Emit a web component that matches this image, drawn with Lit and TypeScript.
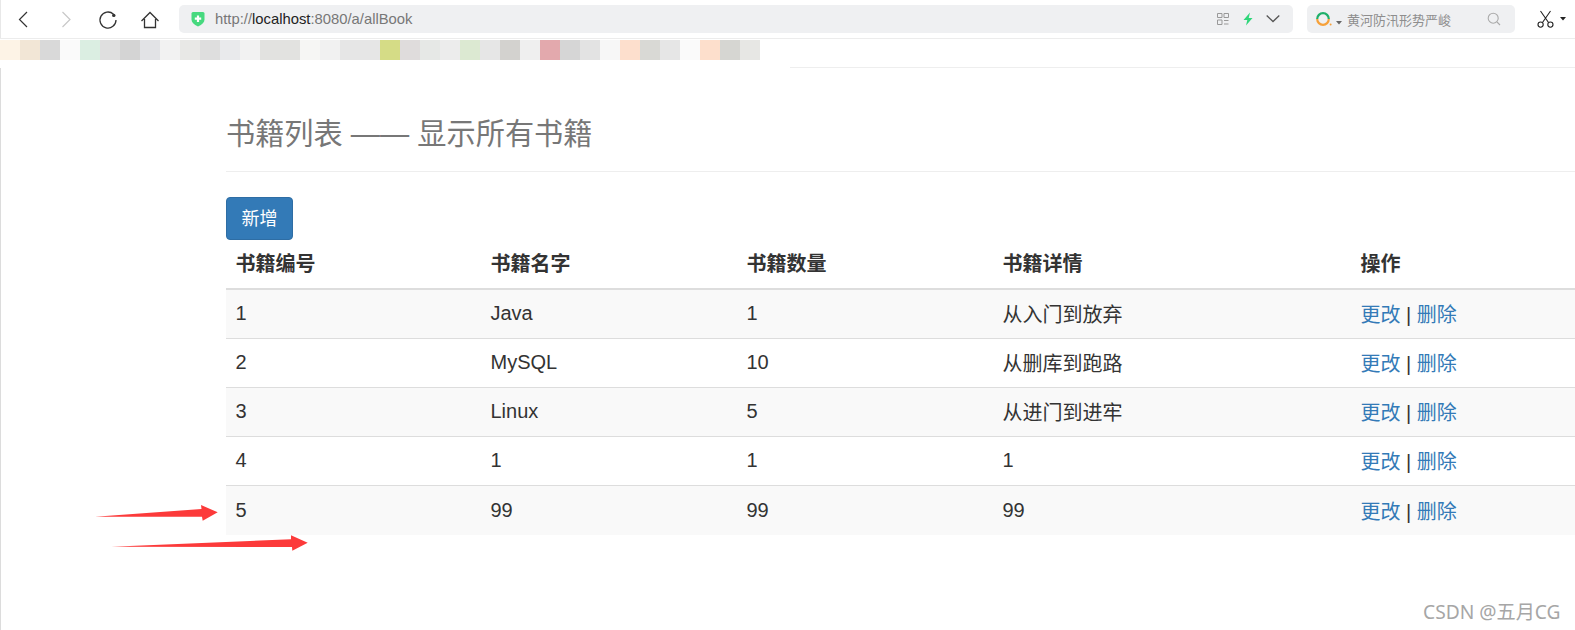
import { LitElement, html, css, svg } from "lit";
import { customElement } from "lit/decorators.js";

const SW = ["#fdf3e6","#f2e6d6","#d9d9d9","#fafafa","#dbeee2","#dfdfdf","#d4d4d4","#e2e3e6","#f2f2f2","#e8e8e6","#dedede","#e9eaec","#f2f2f2","#e2e2e0","#e2e2e0","#f6f6f4","#f1f1f1","#e6e6e6","#e6e6e6","#d5dc86","#dfdcdc","#e6e8e6","#ececec","#dce9d2","#e6e6e6","#d3d2cf","#efefef","#e3a9ad","#d6d6d6","#e3e3e3","#f7f7f7","#fddfcd","#d9d9d5","#e6e6e6","#fafafa","#fddfcc","#d6d6d2","#e7e7e4"];
const ROWS = [
  ["1","Java","1","从入门到放弃"],
  ["2","MySQL","10","从删库到跑路"],
  ["3","Linux","5","从进门到进牢"],
  ["4","1","1","1"],
  ["5","99","99","99"],
];

@customElement("app-root")
export class AppRoot extends LitElement {
  static styles = css`
    :host { display: block; position: relative; width: 1575px; height: 630px; overflow: hidden; background: #fff;
      font-family: "Liberation Sans", "Noto Sans CJK SC", sans-serif; color: #333; }
    .toolbar { height: 39px; box-sizing: border-box; border-bottom: 1px solid #ececec; box-shadow: inset 1px 0 0 #e8e8e8; display: flex; align-items: center; }
    .nav { display: block; flex: none; width: 179px; height: 38px; }
    .url { width: 1114px; height: 28px; box-sizing: border-box; background: #eff0f2; border-radius: 5px; display: flex; align-items: center; padding: 0 13px 0 12px; font-size: 14.8px; color: #777; flex: none; }
    .url b { font-weight: 400; color: #222; }
    .url .addr { margin-left: 10px; flex: 1; }
    .search { margin-left: 14px; width: 208px; height: 28px; box-sizing: border-box; background: #eff0f2; border-radius: 5px; display: flex; align-items: center; padding: 0 14px 0 8px; font-size: 13px; color: #8e8e8e; flex: none; }
    .search span { margin-left: 5px; flex: 1; white-space: nowrap; }
    .cut { margin-left: 22px; display: flex; align-items: center; gap: 6px; }
    .strip { display: flex; height: 20px; margin-top: 1px; }
    .strip i { width: 20px; height: 20px; display: block; flex: none; }
    .rule { margin: 7px 0 0 790px; height: 1px; background: #eee; }
    .body { border-left: 1px solid #dcdcdc; height: 562px; box-sizing: border-box; padding-left: 225px; }
    h1 { margin: 0; font-size: 29.2px; font-weight: 400; color: #777; line-height: 40px; padding-top: 46px; height: 104px; box-sizing: border-box; border-bottom: 1px solid #eee; white-space: nowrap; }
    .btn { display: block; margin-top: 25px; width: 67px; height: 43px; box-sizing: border-box; background: #337ab7; border: 1px solid #2e6da4; border-radius: 4px; color: #fff; font-size: 18px; line-height: 42px; text-align: center; }
    table { border-collapse: separate; border-spacing: 0; table-layout: fixed; width: 1349px; font-size: 20px; }
    col.c1 { width: 255px; } col.c2 { width: 256px; } col.c3 { width: 256px; } col.c4 { width: 358px; } col.c5 { width: 224px; }
    th { text-align: left; font-weight: 700; padding: 0 10px 4px 9.5px; height: 50px; border-bottom: 2px solid #ddd; box-sizing: border-box; }
    td { padding: 0 10px 1px 9.5px; height: 49px; box-sizing: border-box; border-bottom: 1px solid #ddd; }
    tbody tr:nth-child(odd) td { background: #f9f9f9; }
    tbody tr:last-child td { border-bottom: 0; }
    a { color: #337ab7; text-decoration: none; }
    .arrows { position: absolute; left: 0; top: 0; pointer-events: none; }
    .mark { position: absolute; left: 1423px; top: 597px; font-family: "Noto Sans", "Noto Sans CJK SC", sans-serif; font-size: 19.2px; color: #a6a6a6; white-space: nowrap; }
  `;

  render() {
    return html`
      <div class="toolbar">
        <svg class="nav" viewBox="0 0 179 38">
          <path d="M27 12 L19.5 19.5 L27 27" fill="none" stroke="#333" stroke-width="1.2"/>
          <path d="M62.5 12 L70 19.5 L62.5 27" fill="none" stroke="#c8c8c8" stroke-width="1.2"/>
          <path d="M113.5 14.2 A8 8 0 1 0 116 20" fill="none" stroke="#333" stroke-width="1.3"/>
          <circle cx="113.8" cy="15.4" r="1.7" fill="#333"/>
          <path d="M141.5 21 L150 12.5 L158.5 21 M144.5 19 V27.5 H155.5 V19" fill="none" stroke="#333" stroke-width="1.3"/>
        </svg>
        <div class="url">
          <svg width="14" height="16" viewBox="0 0 14 16"><path d="M0.5 2.5 Q0.5 1 2 1 H12 Q13.5 1 13.5 2.5 V8.5 Q13.5 12.5 7 15.5 Q0.5 12.5 0.5 8.5 Z" fill="#47d97f"/><path d="M7 4.5 V11 M3.8 7.7 H10.2" stroke="#fff" stroke-width="2.2"/></svg>
          <span class="addr">http://<b>localhost</b>:8080/a/allBook</span>
          <svg width="12" height="12" viewBox="0 0 12 12"><path d="M0.5 0.5h4.5v4H0.5z M7 0.5h4.5v4H7z M0.5 7h4.5v4.5H0.5z" fill="none" stroke="#999" stroke-width="1"/><path d="M7 7.5h4.5 M7 11h4.5" stroke="#999" stroke-width="1"/></svg>
          <svg style="margin-left:13px" width="12" height="14" viewBox="0 0 12 14"><path d="M8 0.5 L1.5 8 H5.3 L4 13.5 L10.5 6 H6.7 Z" fill="#2fd67a"/></svg>
          <svg style="margin-left:12px" width="14" height="10" viewBox="0 0 14 10"><path d="M0.7 1.5 L7 7.5 L13.3 1.5" fill="none" stroke="#555" stroke-width="1.3"/></svg>
        </div>
        <div class="search">
          <svg width="18" height="18" viewBox="0 0 18 18"><path d="M2.2 9 A5.8 5.8 0 0 1 13.8 9" fill="none" stroke="#1fb06a" stroke-width="2.2"/><path d="M2.2 9 A5.8 5.8 0 0 0 13.8 9" fill="none" stroke="#f6a13a" stroke-width="2.2"/><circle cx="15.6" cy="14.6" r="1" fill="#f6a13a"/></svg>
          <svg style="margin-left:3px;margin-top:8px" width="6" height="4" viewBox="0 0 6 4"><path d="M0 0H6L3 3.5Z" fill="#666"/></svg>
          <span>黄河防汛形势严峻</span>
          <svg width="14" height="14" viewBox="0 0 14 14"><circle cx="6.2" cy="6.2" r="5" fill="none" stroke="#aaa" stroke-width="1.1"/><path d="M10 10 L13 13" stroke="#aaa" stroke-width="1.1"/></svg>
        </div>
        <div class="cut">
          <svg width="17" height="18" viewBox="0 0 17 18"><path d="M3.5 1 L11.5 12.5 M13.5 1 L5.5 12.5" fill="none" stroke="#222" stroke-width="1.1"/><circle cx="3.6" cy="14.6" r="2.6" fill="none" stroke="#222" stroke-width="1.1"/><circle cx="13.4" cy="14.6" r="2.6" fill="none" stroke="#222" stroke-width="1.1"/></svg>
          <svg width="6" height="4" viewBox="0 0 6 4"><path d="M0 0H6L3 3.5Z" fill="#222"/></svg>
        </div>
      </div>
      <div class="strip">${SW.map((c) => html`<i style="background:${c}"></i>`)}</div>
      <div class="rule"></div>
      <div class="body">
        <h1>书籍列表 —— 显示所有书籍</h1>
        <a class="btn">新增</a>
        <table>
          <colgroup><col class="c1"/><col class="c2"/><col class="c3"/><col class="c4"/><col class="c5"/></colgroup>
          <thead><tr><th>书籍编号</th><th>书籍名字</th><th>书籍数量</th><th>书籍详情</th><th>操作</th></tr></thead>
          <tbody>
            ${ROWS.map((r) => html`<tr>${r.map((c) => html`<td>${c}</td>`)}<td><a>更改</a> | <a>删除</a></td></tr>`)}
          </tbody>
        </table>
      </div>
      <svg class="arrows" width="1575" height="630" viewBox="0 0 1575 630">
        ${svg`<path d="M95 516.8 L201.5 509 L201 505 L217.7 512.3 L202.7 520.7 L202 516.7 Z" fill="#fc3a3a"/>
        <path d="M111.5 546.8 L291 539.3 L291 535.3 L307.7 542.7 L292.3 550.7 L292 547 Z" fill="#fc3a3a"/>`}
      </svg>
      <div class="mark">CSDN @五月CG</div>
    `;
  }
}
